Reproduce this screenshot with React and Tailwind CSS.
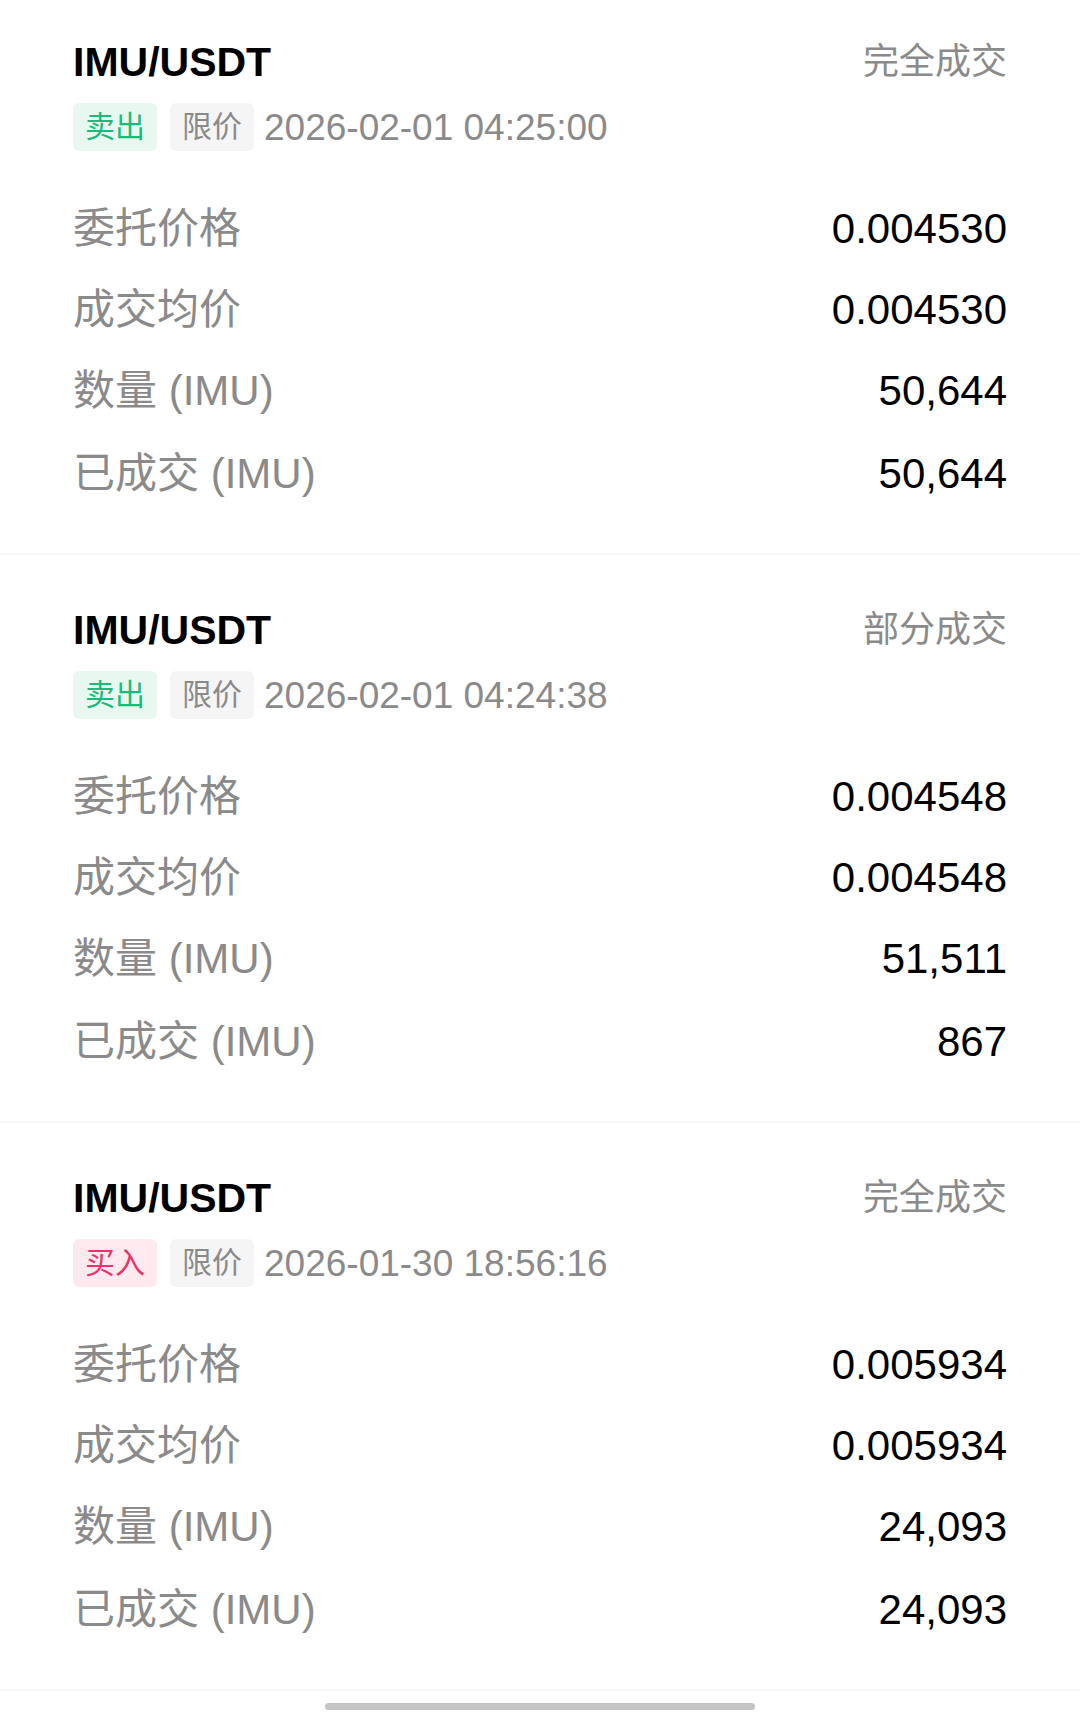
import React from "react";

const orders = [
  {
    side: "sell",
    status: "完全成交",
    time: "2026-02-01 04:25:00",
    price: "0.004530",
    avg: "0.004530",
    qty: "50,644",
    filled: "50,644",
  },
  {
    side: "sell",
    status: "部分成交",
    time: "2026-02-01 04:24:38",
    price: "0.004548",
    avg: "0.004548",
    qty: "51,511",
    filled: "867",
  },
  {
    side: "buy",
    status: "完全成交",
    time: "2026-01-30 18:56:16",
    price: "0.005934",
    avg: "0.005934",
    qty: "24,093",
    filled: "24,093",
  },
];

function Row({ label, value, extra }) {
  return (
    <div className={"flex h-[81px] items-center justify-between " + (extra || "")}>
      <span className="text-[42px] text-[#8a8a8a]">{label}</span>
      <span className="text-[42px] text-black">{value}</span>
    </div>
  );
}

function Card({ o, first }) {
  const sell = o.side === "sell";
  return (
    <div
      className={
        "border-b-2 border-[#f5f5f5] px-[73px] pb-[39px] " +
        (first ? "pt-[34px]" : "pt-[47px]")
      }
    >
      <div className="flex h-[56px] items-center justify-between">
        <span className="text-[41px] font-bold leading-none text-black">IMU/USDT</span>
        <span className="text-[36px] leading-none text-[#8a8a8a]">{o.status}</span>
      </div>
      <div className="mt-[13px] flex h-[48px] items-center">
        <span
          className={
            "flex h-[48px] items-center rounded-[6px] px-[12px] text-[30px] leading-none " +
            (sell ? "bg-[#e8f8f1] text-[#1db97a]" : "bg-[#feeaee] text-[#e8346a]")
          }
        >
          {sell ? "卖出" : "买入"}
        </span>
        <span className="ml-[13px] flex h-[48px] items-center rounded-[6px] bg-[#f5f5f5] px-[12px] text-[30px] leading-none text-[#8a8a8a]">
          限价
        </span>
        <span className="ml-[10px] text-[37px] leading-none text-[#8a8a8a]">{o.time}</span>
      </div>
      <div className="mt-[37px]">
        <Row label="委托价格" value={o.price} />
        <Row label="成交均价" value={o.avg} />
        <Row label="数量 (IMU)" value={o.qty} />
        <Row label="已成交 (IMU)" value={o.filled} extra="mt-[2px]" />
      </div>
    </div>
  );
}

export default function App() {
  return (
    <div
      className="min-h-[1714px] w-[1080px] bg-white"
      style={{ fontFamily: '"Liberation Sans", "Noto Sans CJK SC", sans-serif' }}
    >
      {orders.map((o, i) => (
        <Card key={i} o={o} first={i === 0} />
      ))}
      <div className="flex justify-center pt-[12px]">
        <div className="h-[7px] w-[430px] rounded-full bg-[#c4c4c4]" />
      </div>
    </div>
  );
}
